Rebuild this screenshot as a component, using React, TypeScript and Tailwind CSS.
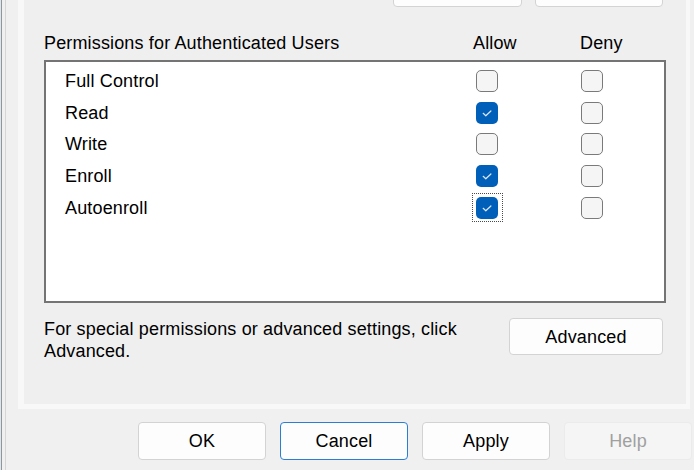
import React from "react";

type Perm = { name: string; allow: boolean; deny: boolean; focused?: boolean };

const perms: Perm[] = [
  { name: "Full Control", allow: false, deny: false },
  { name: "Read", allow: true, deny: false },
  { name: "Write", allow: false, deny: false },
  { name: "Enroll", allow: true, deny: false },
  { name: "Autoenroll", allow: true, deny: false, focused: true },
];

function CheckBox({ checked, focused }: { checked: boolean; focused?: boolean }) {
  return (
    <div className="relative w-[22px] h-[22px] shrink-0">
      {checked ? (
        <div className="w-full h-full rounded-[5px] bg-[#005fb8] flex items-center justify-center">
          <svg width="22" height="22" viewBox="0 0 22 22" fill="none">
            <path d="M7.2 11.3l2.6 2.5L14.9 9" stroke="#dce8f7" strokeWidth={1.2} strokeLinecap="round" strokeLinejoin="round" />
          </svg>
        </div>
      ) : (
        <div className="w-full h-full rounded-[5px] border-[1.5px] border-[#7a7a7a] bg-[#f5f5f5]" />
      )}
      {focused && (
        <div className="absolute -left-[4px] -top-[4px] -right-[5px] -bottom-[3px] border border-dotted border-[#4a4a4a]" />
      )}
    </div>
  );
}

function Btn({ label, primary, disabled }: { label: string; primary?: boolean; disabled?: boolean }) {
  return (
    <button
      className={
        disabled
          ? "w-[128px] h-[38px] rounded-[4px] border border-[#ebebeb] bg-[#f5f5f5] text-[#a0a0a0] pt-[1px]"
          : primary
            ? "w-[128px] h-[38px] rounded-[4px] border border-[#2a7fd4] bg-[#fdfdfd] text-black pt-[1px]"
            : "w-[128px] h-[38px] rounded-[4px] border border-[#d3d3d3] bg-[#fdfdfd] text-black pt-[1px]"
      }
    >
      {label}
    </button>
  );
}

export default function App() {
  return (
    <div
      className="w-[694px] h-[470px] overflow-hidden bg-[#f0f0f0] flex text-[18px] tracking-[0.15px] text-black"
      style={{ fontFamily: '"Liberation Sans", Arial, sans-serif' }}
    >
      {/* Window edge */}
      <div className="w-[1px] bg-[#e4e4e4]" />
      <div className="w-[1px] bg-[#8b97a3]" />
      <div className="w-[3px]" />
      <div className="w-[1px] bg-[#d6d6d6]" />

      <div className="flex-1 flex flex-col pl-[12px]">
        {/* Tab page */}
        <div className="w-[672px] h-[409px] shrink-0 border-l-[6px] border-r-[4px] border-b-[5px] border-[#f8f8f8] bg-[#efefef] flex flex-col">
          {/* Buttons cut off at top */}
          <div className="flex justify-end gap-[13px] pr-[23px] -mt-[30px]">
            <div className="w-[129px] h-[37px] rounded-[4px] border border-[#d3d3d3] bg-[#fdfdfd]" />
            <div className="w-[128px] h-[37px] rounded-[4px] border border-[#d3d3d3] bg-[#fdfdfd]" />
          </div>

          <div className="pl-[20px] pr-[20px] flex flex-col">
            {/* Header */}
            <div className="flex mt-[24px] leading-[24px]">
              <div className="w-[429px]">Permissions for Authenticated Users</div>
              <div className="w-[107px]">Allow</div>
              <div>Deny</div>
            </div>

            {/* List */}
            <div className="mt-[5px] w-[622px] h-[243px] border-2 border-[#747474] bg-white pt-[3px]">
              {perms.map((p) => (
                <div key={p.name} className="h-[31.75px] flex items-center">
                  <div className="w-[430px] pl-[19px] leading-[24px]">{p.name}</div>
                  <CheckBox checked={p.allow} focused={p.focused} />
                  <div className="w-[83px]" />
                  <CheckBox checked={p.deny} />
                </div>
              ))}
            </div>

            {/* Advanced */}
            <div className="mt-[15px] flex items-start justify-between pr-[3px]">
              <div className="w-[450px] leading-[22px]">
                For special permissions or advanced settings, click Advanced.
              </div>
              <button className="w-[154px] h-[37px] rounded-[4px] border border-[#d3d3d3] bg-[#fdfdfd] pt-[1px]">
                Advanced
              </button>
            </div>
          </div>
        </div>

        {/* Dialog buttons */}
        <div className="flex gap-[14px] mt-[13px] pl-[120px]">
          <Btn label="OK" />
          <Btn label="Cancel" primary />
          <Btn label="Apply" />
          <Btn label="Help" disabled />
        </div>
      </div>
    </div>
  );
}
